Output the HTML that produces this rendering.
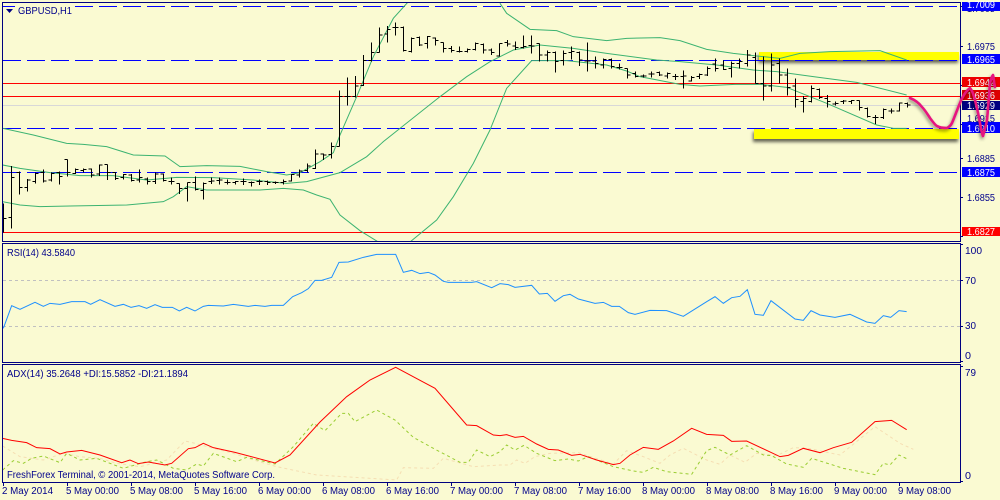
<!DOCTYPE html>
<html><head><meta charset="utf-8"><style>
html,body{margin:0;padding:0;background:#fafad2}
svg{display:block}
text{font-family:"Liberation Sans",sans-serif;font-size:10px;fill:#00008b}
.w{fill:#fff}
.l{fill:none;vector-effect:non-scaling-stroke;stroke-width:1}
.l *{vector-effect:non-scaling-stroke}
</style></head><body>
<svg width="1000" height="500" viewBox="0 0 1000 500" xmlns="http://www.w3.org/2000/svg">
<defs>
<filter id="s" x="-10%" y="-60%" width="120%" height="250%"><feDropShadow dx="-1" dy="3" stdDeviation="1.5" flood-color="#000" flood-opacity=".6"/></filter>
<filter id="p" x="-15%" y="-15%" width="130%" height="130%"><feDropShadow dx="-1" dy="2" stdDeviation="1.5" flood-color="#000" flood-opacity=".45"/></filter>
<clipPath id="c"><rect x="3" y="3" width="957" height="238"/></clipPath>
</defs>
<rect width="1000" height="500" fill="#fafad2"/>

<g shape-rendering="crispEdges">
<g stroke="#0000ff" stroke-dasharray="18 6">
<path d="M3 6.5H960M3 60.5H960M3 128.5H960M3 172.5H960"/>
</g>
<path d="M3 83.5H960M3 96.5H960M3 232.5H960" stroke="#ff0000"/>
<path d="M3 105.5H960" stroke="#d8d8d8"/>
</g>
<rect x="15" y="4" width="60" height="12" fill="#fafad2"/>

<g filter="url(#s)" shape-rendering="crispEdges">
<rect x="759" y="52" width="200" height="8" fill="#ffff00"/>
<rect x="754" y="129" width="205" height="10" fill="#ffff00"/>
</g>
<path d="M3 60.5H960M3 128.5H960" stroke="#0000ff" stroke-dasharray="18 6" shape-rendering="crispEdges"/>

<g clip-path="url(#c)">
<g fill="none" stroke="#3cb371" stroke-width="1">
<g transform="scale(.33333)">
<polyline class="l" points="8,385 100,405 200,430 250,433 320,440 400,465 495,468 540,500 620,497 720,499 800,515 860,525 900,518 960,485 1000,458 1020,405 1070,290 1120,170 1180,55 1225,5"/>
<polyline class="l" points="1500,10 1520,40 1590,88 1670,92 1720,110 1820,122 1880,115 1980,113 2040,122 2120,148 2200,160 2270,168 2340,175 2400,160 2490,155 2640,152 2720,180"/>
<polyline class="l" points="8,495 60,505 150,518 240,527 340,527 440,540 530,532 640,533 760,540 860,550 920,545 1020,518 1100,470 1150,425 1200,385 1320,290 1400,230 1470,185 1540,150 1620,135 1720,145 1820,160 1970,180 2040,185 2150,195 2260,210 2330,215 2440,230 2570,247 2720,285"/>
<polyline class="l" points="8,605 60,615 120,620 210,618 380,615 490,605 520,590 560,560 620,570 780,570 850,565 910,570 950,585 990,598 1020,645 1080,692 1135,726"/>
<polyline class="l" points="1230,726 1310,660 1360,590 1420,490 1470,390 1520,265 1595,182 1700,182 1820,195 1880,213 1920,230 2040,253 2100,258 2205,253 2280,253 2360,262 2480,310 2630,375 2680,385 2720,385"/>
</g>
</g>
</g>

<g transform="scale(1 .33333)" shape-rendering="crispEdges">
<path class="l" stroke="#000" d="M3.5 610V697M3.5 655h3
M11.5 498V686M8.5 652h3M11.5 532h3
M19.5 514V584M16.5 517h3M19.5 562h3
M27.5 537V575M24.5 562h3M27.5 540h3
M35.5 517V551M32.5 545h3M35.5 520h3
M43.5 508V547M40.5 518h3M43.5 543h3
M51.5 517V545M48.5 540h3M51.5 520h3
M59.5 515V554M56.5 517h3M59.5 530h3
M67.5 478V530M64.5 478h3M67.5 518h3
M75.5 505V522M72.5 520h3M75.5 508h3
M83.5 505V517M80.5 512h3M83.5 508h3
M91.5 505V532M88.5 507h3M91.5 525h3
M99.5 493V528M96.5 522h3M99.5 495h3
M107.5 493V540M104.5 493h3M107.5 518h3
M115.5 518V540M112.5 518h3M115.5 535h3
M123.5 522V538M120.5 533h3M123.5 524h3
M131.5 522V545M128.5 525h3M131.5 542h3
M139.5 508V548M136.5 540h3M139.5 533h3
M147.5 533V553M144.5 537h3M147.5 545h3
M155.5 518V552M152.5 545h3M155.5 522h3
M163.5 520V545M160.5 522h3M163.5 542h3
M171.5 533V553M168.5 545h3M171.5 545h3
M179.5 550V582M176.5 550h3M179.5 565h3
M187.5 548V605M184.5 565h3M187.5 548h3
M195.5 530V572M192.5 548h3M195.5 568h3
M203.5 548V598M200.5 572h3M203.5 550h3
M211.5 532V552M208.5 545h3M211.5 543h3
M219.5 532V554M216.5 542h3M219.5 540h3
M227.5 538V554M224.5 548h3M227.5 548h3
M235.5 543V553M232.5 548h3M235.5 545h3
M243.5 535V555M240.5 545h3M243.5 545h3
M251.5 545V560M248.5 548h3M251.5 548h3
M259.5 538V555M256.5 545h3M259.5 545h3
M267.5 542V555M264.5 545h3M267.5 547h3
M275.5 545V552M272.5 548h3M275.5 547h3
M283.5 538V553M280.5 548h3M283.5 545h3
M291.5 522V545M288.5 543h3M291.5 523h3
M299.5 508V532M296.5 525h3M299.5 513h3
M307.5 490V518M304.5 512h3M307.5 498h3
M315.5 448V507M312.5 505h3M315.5 462h3
M323.5 460V480M320.5 462h3M323.5 465h3
M331.5 427V475M328.5 463h3M331.5 440h3
M339.5 272V440M336.5 440h3M339.5 290h3
M347.5 232V317M344.5 290h3M347.5 290h3
M355.5 228V292M352.5 290h3M355.5 258h3
M363.5 165V258M360.5 257h3M363.5 182h3
M371.5 128V185M368.5 182h3M371.5 158h3
M379.5 82V158M376.5 157h3M379.5 105h3
M387.5 78V128M384.5 102h3M387.5 88h3
M395.5 68V107M392.5 82h3M395.5 82h3
M403.5 80V155M400.5 82h3M403.5 152h3
M411.5 113V158M408.5 155h3M411.5 115h3
M419.5 110V138M416.5 112h3M419.5 135h3
M427.5 108V145M424.5 130h3M427.5 110h3
M435.5 112V136M432.5 114h3M435.5 122h3
M443.5 127V158M440.5 128h3M443.5 145h3
M451.5 138V158M448.5 145h3M451.5 152h3
M459.5 140V158M456.5 155h3M459.5 155h3
M467.5 145V158M464.5 155h3M467.5 148h3
M475.5 127V152M472.5 148h3M475.5 130h3
M483.5 130V160M480.5 133h3M483.5 150h3
M491.5 145V165M488.5 150h3M491.5 158h3
M499.5 130V170M496.5 168h3M499.5 130h3
M507.5 120V140M504.5 128h3M507.5 132h3
M515.5 125V150M512.5 138h3M515.5 142h3
M523.5 107V145M520.5 142h3M523.5 140h3
M531.5 107V160M528.5 136h3M531.5 138h3
M539.5 130V185M536.5 130h3M539.5 165h3
M547.5 152V185M544.5 165h3M547.5 158h3
M555.5 155V218M552.5 158h3M555.5 185h3
M563.5 152V197M560.5 182h3M563.5 160h3
M571.5 140V178M568.5 158h3M571.5 155h3
M579.5 155V198M576.5 158h3M579.5 180h3
M587.5 127V215M584.5 183h3M587.5 183h3
M595.5 170V205M592.5 183h3M595.5 190h3
M603.5 175V205M600.5 195h3M603.5 178h3
M611.5 175V205M608.5 178h3M611.5 200h3
M619.5 190V208M616.5 203h3M619.5 203h3
M627.5 205V235M624.5 205h3M627.5 225h3
M635.5 215V233M632.5 220h3M635.5 230h3
M643.5 223V233M640.5 228h3M643.5 228h3
M651.5 215V232M648.5 222h3M651.5 222h3
M659.5 215V228M656.5 218h3M659.5 225h3
M667.5 217V235M664.5 228h3M667.5 220h3
M675.5 222V240M672.5 230h3M675.5 230h3
M683.5 212V265M680.5 230h3M683.5 228h3
M691.5 228V245M688.5 243h3M691.5 232h3
M699.5 220V237M696.5 230h3M699.5 223h3
M707.5 200V228M704.5 225h3M707.5 205h3
M715.5 175V215M712.5 192h3M715.5 205h3
M723.5 182V210M720.5 195h3M723.5 208h3
M731.5 185V233M728.5 205h3M731.5 190h3
M739.5 175V205M736.5 190h3M739.5 185h3
M747.5 150V200M744.5 190h3M747.5 165h3
M755.5 157V250M752.5 172h3M755.5 250h3
M763.5 170V302M760.5 250h3M763.5 258h3
M771.5 160V275M768.5 258h3M771.5 195h3
M779.5 175V250M776.5 190h3M779.5 225h3
M787.5 205V287M784.5 225h3M787.5 262h3
M795.5 235V323M792.5 258h3M795.5 298h3
M803.5 288V338M800.5 305h3M803.5 295h3
M811.5 257V308M808.5 305h3M811.5 265h3
M819.5 265V297M816.5 268h3M819.5 293h3
M827.5 285V323M824.5 295h3M827.5 305h3
M835.5 305V317M832.5 312h3M835.5 310h3
M843.5 300V312M840.5 305h3M843.5 303h3
M851.5 300V312M848.5 305h3M851.5 302h3
M859.5 302V332M856.5 302h3M859.5 322h3
M867.5 323V352M864.5 325h3M867.5 350h3
M875.5 345V372M872.5 352h3M875.5 352h3
M883.5 325V357M880.5 352h3M883.5 328h3
M891.5 325V340M888.5 333h3M891.5 333h3
M899.5 307V335M896.5 333h3M899.5 309h3
M907.5 307V322M904.5 310h3M907.5 315h3"/>
</g>

<!-- RSI -->
<path d="M3 280.5H960M3 326.5H960" stroke="#c0c0c0" stroke-dasharray="3 3" shape-rendering="crispEdges"/>
<g transform="translate(0 240) scale(.33333)" fill="none" stroke="#1e90ff">
<polyline class="l" points="10,265 35,197 60,208 105,187 130,199 150,190 180,193 215,185 255,185 272,193 300,179 345,199 370,193 393,202 417,197 440,205 465,194 487,202 517,202 538,213 560,202 585,213 610,199 625,196 670,198 700,193 745,199 765,196 795,199 815,196 850,196 878,170 905,158 925,146 945,121 965,121 995,112 1017,67 1045,66 1090,52 1130,43 1187,43 1210,97 1235,91 1260,101 1285,97 1305,105 1330,124 1345,127 1415,127 1430,125 1475,143 1500,131 1525,134 1545,142 1595,136 1618,162 1642,160 1665,184 1690,167 1710,163 1735,177 1785,190 1810,187 1835,199 1858,199 1885,218 1905,223 1950,211 2000,212 2050,229 2120,185 2145,170 2170,190 2195,173 2220,169 2242,149 2265,223 2290,226 2313,182 2385,237 2410,241 2433,212 2460,225 2505,232 2550,223 2600,246 2625,250 2650,227 2672,232 2697,212 2720,215"/>
</g>

<!-- ADX -->
<g transform="translate(0 360) scale(.33333)" fill="none">
<polyline class="l" stroke="#f5deb3" stroke-dasharray="3 3" points="8,258 60,290 130,300 190,280 240,290 300,295 350,310 420,320 500,300 555,243 585,250 640,265 700,280 760,300 830,320 950,345 1190,360 1210,323 1300,325 1330,295 1420,320 1500,315 1530,315 1550,300 1575,310 1605,290 1650,280 1735,278 1840,312 1880,272 1930,290 1980,310 2010,285 2050,265 2120,300 2160,313 2190,285 2235,307 2270,280 2330,287 2380,263 2425,265 2520,285 2625,200 2700,250 2740,268"/>
<polyline class="l" stroke="#9acd32" stroke-dasharray="3 3" points="8,330 40,302 70,310 95,295 130,288 180,308 200,280 240,300 290,295 370,325 440,305 470,300 520,325 560,330 590,312 610,318 640,280 710,305 740,292 825,312 880,260 940,190 975,212 1025,160 1045,160 1065,185 1130,150 1185,180 1240,232 1300,265 1380,307 1405,307 1430,270 1470,290 1500,275 1520,255 1545,270 1572,256 1610,280 1665,302 1705,297 1735,303 1765,290 1840,320 1900,333 1930,337 1960,322 2000,335 2075,343 2120,272 2145,262 2190,285 2240,257 2290,285 2315,287 2360,312 2410,322 2435,295 2530,325 2625,344 2650,310 2670,315 2697,285 2720,296"/>
<polyline class="l" stroke="#ff0000" points="8,235 35,241 80,248 110,263 150,266 180,282 200,276 245,271 300,285 365,308 390,300 415,311 445,306 495,315 515,310 565,266 585,263 610,250 640,263 705,277 825,309 870,285 960,186 1040,110 1110,60 1187,22 1305,85 1400,195 1430,197 1480,225 1500,227 1520,224 1545,232 1570,229 1610,252 1645,268 1675,270 1715,286 1740,283 1790,300 1840,314 1860,310 1890,285 1930,262 1975,268 2020,243 2075,205 2120,223 2170,226 2195,244 2240,243 2340,290 2365,286 2410,265 2460,278 2500,263 2555,247 2625,185 2675,181 2720,209"/>
</g>

<!-- frames -->
<g fill="none" stroke="#000080" shape-rendering="crispEdges">
<path d="M2.5 2.5H960.5V241.5H2.5Z"/>
<path d="M2.5 243.5H960.5V362.5H2.5Z"/>
<path d="M2.5 364.5H960.5V482.5H2.5Z"/>
<path d="M960 6.5h3M960 46.5h3M960 85.5h3M960 124.5h3M960 158.5h3M960 197.5h3M960 236.5h3M960 244.5h3M960 280.5h3M960 326.5h3M960 361.5h3M960 366.5h3M960 481.5h3"/>
<path d="M3.5 482v4M67.5 482v4M131.5 482v4M195.5 482v4M259.5 482v4M323.5 482v4M387.5 482v4M451.5 482v4M515.5 482v4M579.5 482v4M643.5 482v4M707.5 482v4M771.5 482v4M835.5 482v4M899.5 482v4"/>
</g>

<!-- legends -->
<path d="M6 9h7l-3.5 4z" fill="#000080"/>
<text x="18" y="14" textLength="54" lengthAdjust="spacingAndGlyphs">GBPUSD,H1</text>
<text x="7" y="256" textLength="68" lengthAdjust="spacingAndGlyphs">RSI(14) 43.5840</text>
<text x="7" y="377" textLength="181" lengthAdjust="spacingAndGlyphs">ADX(14) 35.2648 +DI:15.5852 -DI:21.1894</text>
<text x="7" y="478" textLength="268" lengthAdjust="spacingAndGlyphs">FreshForex Terminal, © 2001-2014, MetaQuotes Software Corp.</text>

<!-- price axis -->
<g>
<text x="967" y="12" textLength="28" lengthAdjust="spacingAndGlyphs">1.7005</text>
<rect x="962" y="2" width="38" height="9" fill="#0000ff"/>
<text class="w" x="967" y="8" textLength="28" lengthAdjust="spacingAndGlyphs">1.7009</text>
<text x="967" y="50" textLength="28" lengthAdjust="spacingAndGlyphs">1.6975</text>
<rect x="962" y="54" width="38" height="10" fill="#0000ff"/>
<text class="w" x="967" y="63" textLength="28" lengthAdjust="spacingAndGlyphs">1.6965</text>
<text x="967" y="162" textLength="28" lengthAdjust="spacingAndGlyphs">1.6885</text>
<text x="967" y="201" textLength="28" lengthAdjust="spacingAndGlyphs">1.6855</text>
<text x="967" y="122" textLength="28" lengthAdjust="spacingAndGlyphs">1.6915</text>
<rect x="962" y="77" width="38" height="10" fill="#ee0000"/>
<text class="w" x="967" y="86" textLength="28" lengthAdjust="spacingAndGlyphs">1.6942</text>
<rect x="962" y="90" width="38" height="10" fill="#dd0000"/>
<text class="w" x="967" y="99" textLength="28" lengthAdjust="spacingAndGlyphs">1.6936</text>
<rect x="962" y="101" width="38" height="9" fill="#000080"/>
<text class="w" x="967" y="109" textLength="28" lengthAdjust="spacingAndGlyphs">1.6929</text>
<rect x="962" y="122" width="38" height="11" fill="#0000ff"/>
<text class="w" x="967" y="132" textLength="28" lengthAdjust="spacingAndGlyphs">1.6910</text>
<rect x="962" y="167" width="38" height="10" fill="#0000ff"/>
<text class="w" x="967" y="176" textLength="28" lengthAdjust="spacingAndGlyphs">1.6875</text>
<rect x="962" y="227" width="38" height="9" fill="#ff0000"/>
<text class="w" x="967" y="235" textLength="28" lengthAdjust="spacingAndGlyphs">1.6827</text>
<text x="965" y="254" textLength="17" lengthAdjust="spacingAndGlyphs">100</text>
<text x="965" y="284" textLength="11" lengthAdjust="spacingAndGlyphs">70</text>
<text x="965" y="329" textLength="11" lengthAdjust="spacingAndGlyphs">30</text>
<text x="965" y="359" textLength="6" lengthAdjust="spacingAndGlyphs">0</text>
<text x="965" y="376" textLength="11" lengthAdjust="spacingAndGlyphs">79</text>
<text x="965" y="479" textLength="6" lengthAdjust="spacingAndGlyphs">0</text>
</g>

<!-- time axis -->
<g>
<text x="2" y="494" textLength="51" lengthAdjust="spacingAndGlyphs">2 May 2014</text>
<text x="66" y="494" textLength="53" lengthAdjust="spacingAndGlyphs">5 May 00:00</text>
<text x="130" y="494" textLength="53" lengthAdjust="spacingAndGlyphs">5 May 08:00</text>
<text x="194" y="494" textLength="53" lengthAdjust="spacingAndGlyphs">5 May 16:00</text>
<text x="258" y="494" textLength="53" lengthAdjust="spacingAndGlyphs">6 May 00:00</text>
<text x="322" y="494" textLength="53" lengthAdjust="spacingAndGlyphs">6 May 08:00</text>
<text x="386" y="494" textLength="53" lengthAdjust="spacingAndGlyphs">6 May 16:00</text>
<text x="450" y="494" textLength="53" lengthAdjust="spacingAndGlyphs">7 May 00:00</text>
<text x="514" y="494" textLength="53" lengthAdjust="spacingAndGlyphs">7 May 08:00</text>
<text x="578" y="494" textLength="53" lengthAdjust="spacingAndGlyphs">7 May 16:00</text>
<text x="642" y="494" textLength="53" lengthAdjust="spacingAndGlyphs">8 May 00:00</text>
<text x="706" y="494" textLength="53" lengthAdjust="spacingAndGlyphs">8 May 08:00</text>
<text x="770" y="494" textLength="53" lengthAdjust="spacingAndGlyphs">8 May 16:00</text>
<text x="834" y="494" textLength="53" lengthAdjust="spacingAndGlyphs">9 May 00:00</text>
<text x="898" y="494" textLength="53" lengthAdjust="spacingAndGlyphs">9 May 08:00</text>
</g>

<!-- pink curve -->
<g filter="url(#p)"><path d="M910 98C915 100 919 103 922 107C925 110 928 115 930 118C933 122 935 125 937 126C940 128 944 128 947 128C949 127 951 125 952 123C955 116 957 110 960 103C962 97 966 91 970 88C972 90 974 96 975 100C977 108 979 117 980 123C981 129 982 134 983 136C984 132 986 126 987 120C988 110 989 95 990 83C991 79 992 76 993 75C994 79 994 84 995 87" fill="none" stroke="#e6137f" stroke-width="2.6" stroke-linecap="round" stroke-linejoin="round"/></g>
</svg>
</body></html>
